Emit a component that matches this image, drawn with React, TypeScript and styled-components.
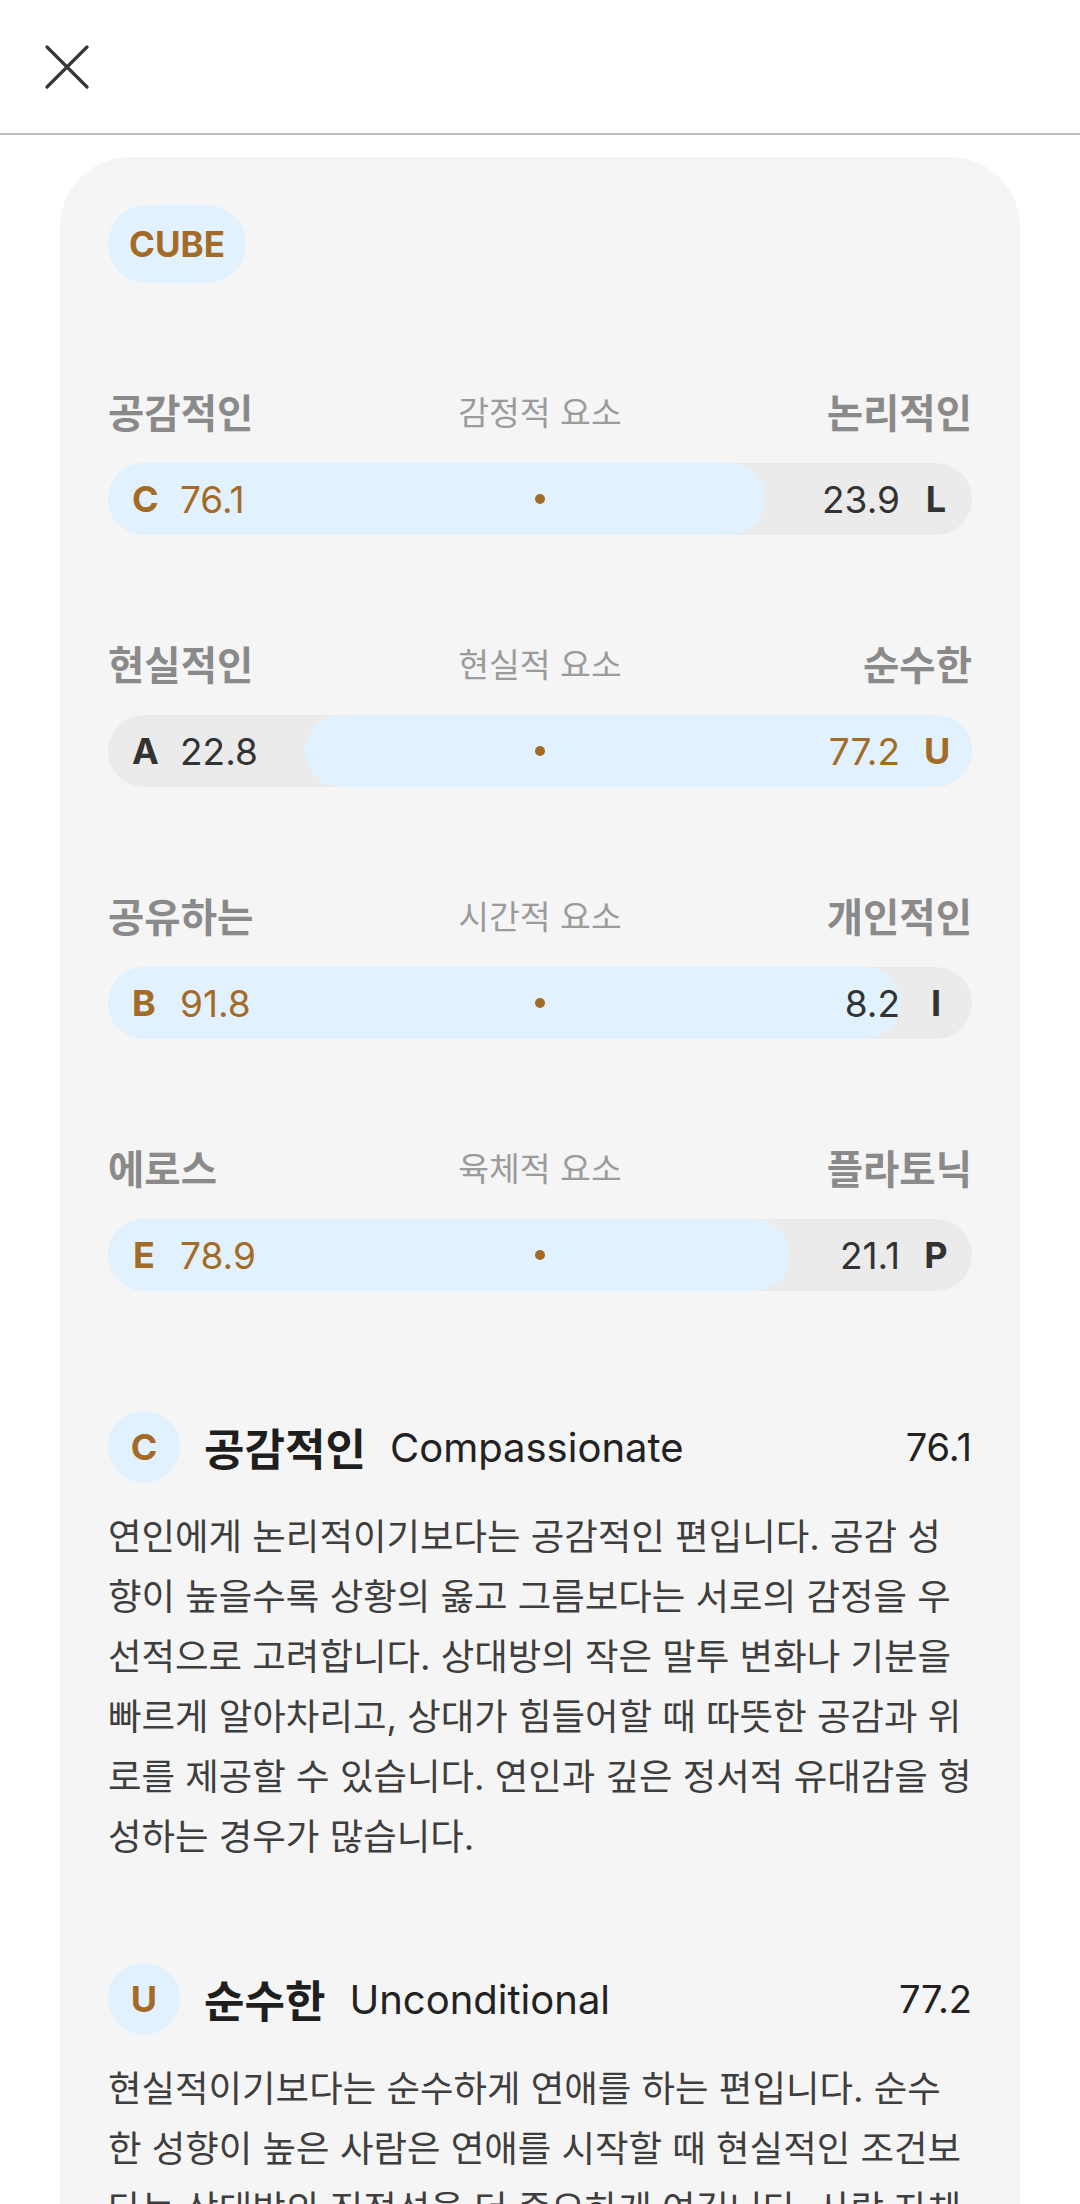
import React from "react";
import styled, { createGlobalStyle } from "styled-components";

const GlobalStyle = createGlobalStyle`
  html, body {
    margin: 0;
    padding: 0;
    background: #fff;
  }
  body {
    font-family: Inter, "Noto Sans CJK KR", sans-serif;
    -webkit-font-smoothing: antialiased;
  }
`;

const BROWN = "#a46b27";
const BLUE = "#e1f1fd";

const Page = styled.div`
  width: 1080px;
  min-height: 2204px;
  background: #fff;
`;

const Header = styled.header`
  height: 135px;
  border-bottom: 2px solid #bdbdbd;
  display: flex;
  align-items: flex-start;
  padding: 45px 0 0 45px;
  box-sizing: border-box;
`;

const CloseButton = styled.button`
  width: 44px;
  height: 44px;
  padding: 0;
  border: none;
  background: none;
  display: flex;
  color: #383838;
`;

const Card = styled.main`
  margin: 22px 60px 0;
  padding: 48px;
  background: #f5f5f5;
  border-radius: 70px 70px 0 0;
  min-height: 2100px;
  box-sizing: border-box;
`;

const Badge = styled.div`
  display: inline-flex;
  align-items: center;
  justify-content: center;
  height: 78px;
  width: 138px;
  border-radius: 39px;
  background: ${BLUE};
  color: ${BROWN};
  font-size: 35px;
  font-weight: 700;
`;

const ScaleList = styled.section`
  margin-top: 99px;
  display: flex;
  flex-direction: column;
  gap: 99px;
`;

const ScaleRow = styled.div`
  display: flex;
  flex-direction: column;
  gap: 37px;
`;

const LabelRow = styled.div`
  height: 44px;
  display: grid;
  grid-template-columns: 1fr auto 1fr;
  align-items: center;
`;

const SideLabel = styled.span<{ $right?: boolean }>`
  font-size: 39.5px;
  font-weight: 700;
  color: #8a8a8a;
  text-align: ${(p) => (p.$right ? "right" : "left")};
`;

const CenterLabel = styled.span`
  font-size: 33.5px;
  color: #9b9b9b;
`;

const Bar = styled.div`
  position: relative;
  height: 72px;
  border-radius: 36px;
  background: #ebebeb;
  overflow: hidden;
`;

const Fill = styled.div`
  position: absolute;
  top: 0;
  bottom: 0;
  border-radius: 36px;
  background: ${BLUE};
`;

const BarContent = styled.div`
  position: relative;
  height: 100%;
  padding: 0 24px;
  display: grid;
  grid-template-columns: 1fr auto 1fr;
  align-items: center;
`;

const Side = styled.div<{ $right?: boolean }>`
  display: flex;
  align-items: center;
  gap: 24px;
  justify-content: ${(p) => (p.$right ? "flex-end" : "flex-start")};
`;

const Letter = styled.span<{ $active: boolean }>`
  width: 24px;
  text-align: center;
  font-size: 36px;
  font-weight: 700;
  color: ${(p) => (p.$active ? BROWN : "#333")};
`;

const Value = styled.span<{ $active: boolean }>`
  font-size: 37px;
  color: ${(p) => (p.$active ? BROWN : "#333")};
`;

const Dot = styled.span`
  width: 10px;
  height: 10px;
  border-radius: 50%;
  background: ${BROWN};
`;

const DetailList = styled.section`
  margin-top: 120px;
  display: flex;
  flex-direction: column;
  gap: 96px;
`;

const Detail = styled.article`
  display: flex;
  flex-direction: column;
  gap: 24px;
`;

const DetailHead = styled.div`
  display: flex;
  align-items: center;
  height: 72px;
`;

const Circle = styled.span`
  width: 72px;
  height: 72px;
  border-radius: 50%;
  background: ${BLUE};
  color: ${BROWN};
  font-size: 36px;
  font-weight: 700;
  display: flex;
  align-items: center;
  justify-content: center;
  flex-shrink: 0;
`;

const Title = styled.span`
  margin-left: 24px;
  font-size: 44px;
  font-weight: 700;
  color: #1e1e1e;
`;

const Subtitle = styled.span`
  margin-left: 24px;
  font-size: 40px;
  color: #222;
  flex: 1;
`;

const Score = styled.span`
  font-size: 38px;
  color: #222;
`;

const Body = styled.p`
  margin: 0;
  font-size: 36.45px;
  line-height: 60px;
  color: #3e3e3e;
  word-break: break-all;
`;

type Scale = {
  left: string;
  right: string;
  middle: string;
  a: string;
  b: string;
  value: number;
};

const scales: Scale[] = [
  { left: "공감적인", right: "논리적인", middle: "감정적 요소", a: "C", b: "L", value: 76.1 },
  { left: "현실적인", right: "순수한", middle: "현실적 요소", a: "A", b: "U", value: 22.8 },
  { left: "공유하는", right: "개인적인", middle: "시간적 요소", a: "B", b: "I", value: 91.8 },
  { left: "에로스", right: "플라토닉", middle: "육체적 요소", a: "E", b: "P", value: 78.9 },
];

const details = [
  {
    letter: "C",
    title: "공감적인",
    en: "Compassionate",
    score: "76.1",
    text:
      "연인에게 논리적이기보다는 공감적인 편입니다. 공감 성향이 높을수록 상황의 옳고 그름보다는 서로의 감정을 우선적으로 고려합니다. 상대방의 작은 말투 변화나 기분을 빠르게 알아차리고, 상대가 힘들어할 때 따뜻한 공감과 위로를 제공할 수 있습니다. 연인과 깊은 정서적 유대감을 형성하는 경우가 많습니다.",
  },
  {
    letter: "U",
    title: "순수한",
    en: "Unconditional",
    score: "77.2",
    text:
      "현실적이기보다는 순수하게 연애를 하는 편입니다. 순수한 성향이 높은 사람은 연애를 시작할 때 현실적인 조건보다는 상대방의 진정성을 더 중요하게 여깁니다. 사랑 자체를 소중히 여기며 계산하지 않고 마음을 표현하는 경우가 많습니다.",
  },
];

const CloseIcon = () => (
  <svg width="44" height="44" viewBox="0 0 44 44" fill="none">
    <path d="M2 2L42 42M42 2L2 42" stroke="currentColor" strokeWidth="3.2" strokeLinecap="round" />
  </svg>
);

const ScaleBar: React.FC<{ scale: Scale }> = ({ scale }) => {
  const leftWins = scale.value >= 50;
  const other = Math.round((100 - scale.value) * 10) / 10;
  const fillStyle = leftWins
    ? { left: 0, width: `${scale.value}%` }
    : { left: `${scale.value}%`, right: 0 };
  return (
    <ScaleRow>
      <LabelRow>
        <SideLabel>{scale.left}</SideLabel>
        <CenterLabel>{scale.middle}</CenterLabel>
        <SideLabel $right>{scale.right}</SideLabel>
      </LabelRow>
      <Bar>
        <Fill style={fillStyle} />
        <BarContent>
          <Side>
            <Letter $active={leftWins}>{scale.a}</Letter>
            <Value $active={leftWins}>{scale.value.toFixed(1)}</Value>
          </Side>
          <Dot />
          <Side $right>
            <Value $active={!leftWins}>{other.toFixed(1)}</Value>
            <Letter $active={!leftWins}>{scale.b}</Letter>
          </Side>
        </BarContent>
      </Bar>
    </ScaleRow>
  );
};

export default function App() {
  return (
    <Page>
      <GlobalStyle />
      <Header>
        <CloseButton aria-label="닫기">
          <CloseIcon />
        </CloseButton>
      </Header>
      <Card>
        <Badge>CUBE</Badge>
        <ScaleList>
          {scales.map((s) => (
            <ScaleBar key={s.a} scale={s} />
          ))}
        </ScaleList>
        <DetailList>
          {details.map((d) => (
            <Detail key={d.letter}>
              <DetailHead>
                <Circle>{d.letter}</Circle>
                <Title>{d.title}</Title>
                <Subtitle>{d.en}</Subtitle>
                <Score>{d.score}</Score>
              </DetailHead>
              <Body>{d.text}</Body>
            </Detail>
          ))}
        </DetailList>
      </Card>
    </Page>
  );
}
